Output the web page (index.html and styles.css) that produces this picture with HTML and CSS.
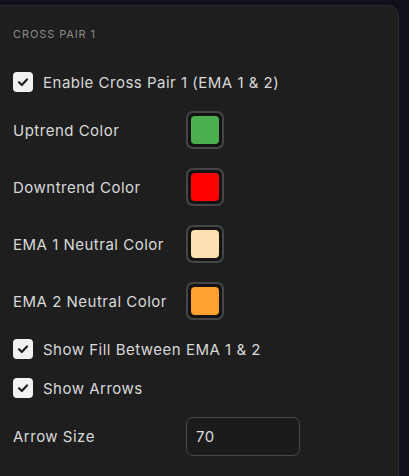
FILE: index.html
```html
<!DOCTYPE html>
<html>
<head>
<meta charset="utf-8">
<link rel="stylesheet" href="styles.css">
</head>
<body>
<div class="page">
  <section class="panel">
    <div class="section-title">CROSS PAIR 1</div>
    <div class="rows">
      <label class="check-row">
        <span class="checkbox"><svg viewBox="0 0 20 20" width="20" height="20"><path d="M6 10.3 L8.8 13 L14 7.5" fill="none" stroke="#1e1e1e" stroke-width="2.2" stroke-linecap="round" stroke-linejoin="round"/></svg></span>
        <span class="check-label">Enable Cross Pair 1 (EMA 1 &amp; 2)</span>
      </label>
      <div class="field-row">
        <span class="field-label">Uptrend Color</span>
        <span class="swatch"><span class="swatch-fill green"></span></span>
      </div>
      <div class="field-row">
        <span class="field-label">Downtrend Color</span>
        <span class="swatch"><span class="swatch-fill red"></span></span>
      </div>
      <div class="field-row">
        <span class="field-label">EMA 1 Neutral Color</span>
        <span class="swatch"><span class="swatch-fill cream"></span></span>
      </div>
      <div class="field-row">
        <span class="field-label">EMA 2 Neutral Color</span>
        <span class="swatch"><span class="swatch-fill orange"></span></span>
      </div>
      <label class="check-row">
        <span class="checkbox"><svg viewBox="0 0 20 20" width="20" height="20"><path d="M6 10.3 L8.8 13 L14 7.5" fill="none" stroke="#1e1e1e" stroke-width="2.2" stroke-linecap="round" stroke-linejoin="round"/></svg></span>
        <span class="check-label">Show Fill Between EMA 1 &amp; 2</span>
      </label>
      <label class="check-row">
        <span class="checkbox"><svg viewBox="0 0 20 20" width="20" height="20"><path d="M6 10.3 L8.8 13 L14 7.5" fill="none" stroke="#1e1e1e" stroke-width="2.2" stroke-linecap="round" stroke-linejoin="round"/></svg></span>
        <span class="check-label">Show Arrows</span>
      </label>
      <div class="field-row">
        <span class="field-label">Arrow Size</span>
        <span class="num-input">70</span>
      </div>
    </div>
  </section>
</div>
</body>
</html>
```
FILE: styles.css
```css
html, body {
  margin: 0;
  padding: 0;
  background: #100f1b;
  height: 100%;
  overflow: hidden;
}
.page {
  padding-top: 5px;
  font-family: Inter, "Noto Sans", sans-serif;
}
.panel {
  width: 399px;
  height: 471px;
  box-sizing: border-box;
  background: #1e1e1e;
  border-top: 1px solid #2a2a2c;
  border-right: 1px solid #2a2a2c;
  border-radius: 0 11px 0 0;
  padding: 21px 13px 0 13px;
}
.section-title {
  font-size: 11px;
  line-height: 14px;
  letter-spacing: 0.9px;
  color: #8a8a8a;
  font-weight: 400;
}
.rows {
  margin-top: 31px;
  display: flex;
  flex-direction: column;
  gap: 19px;
}
.check-row {
  display: flex;
  align-items: center;
  gap: 10px;
  height: 20px;
}
.checkbox {
  width: 20px;
  height: 20px;
  background: #f2f2f2;
  border-radius: 4px;
  display: flex;
  align-items: center;
  justify-content: center;
}
.checkbox svg { display: block; }
.check-label, .field-label {
  font-size: 15px;
  letter-spacing: 0.5px;
  color: #d9d9d9;
}
.field-row {
  display: flex;
  align-items: center;
}
.field-label {
  width: 173px;
}
.swatch {
  width: 38px;
  height: 38px;
  box-sizing: border-box;
  border: 2px solid #464646;
  border-radius: 7px;
  background: #141414;
  padding: 3px;
  display: flex;
}
.swatch-fill {
  flex: 1;
  border-radius: 4px;
}
.green { background: #4caf50; }
.red { background: #ff0000; }
.cream { background: #ffe0b3; }
.orange { background: #ffa030; }
.num-input {
  width: 114px;
  height: 39px;
  box-sizing: border-box;
  border: 1.5px solid #4a4a4a;
  border-radius: 7px;
  background: #1b1b1b;
  display: flex;
  align-items: center;
  padding-left: 9px;
  font-size: 15px;
  letter-spacing: 0.5px;
  color: #dedede;
}
```
